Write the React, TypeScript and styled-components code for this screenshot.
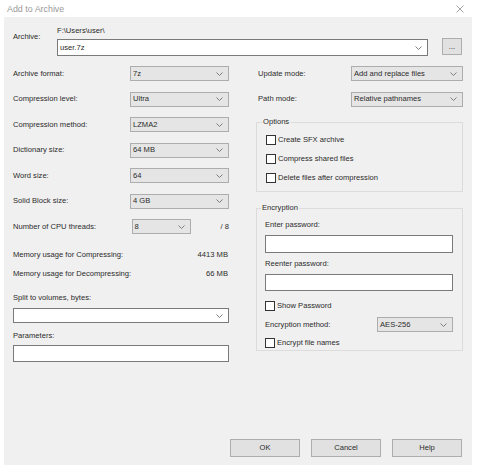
import styled, { createGlobalStyle } from 'styled-components';

const GlobalStyle = createGlobalStyle`
  html, body {
    margin: 0;
    padding: 0;
    background: #ffffff;
  }
  body {
    font-family: "Liberation Sans", Arial, sans-serif;
  }
  * {
    box-sizing: border-box;
  }
`;

const Window = styled.div`
  width: 479px;
  height: 465px;
  display: flex;
  flex-direction: column;
  background: #ffffff;
  overflow: hidden;
`;

const TitleBar = styled.div`
  flex: 0 0 17px;
  display: flex;
  align-items: center;
  justify-content: space-between;
  padding: 0 15px 0 7px;
  font-size: 8.9px;
  color: #9a9a9a;
`;

const Body = styled.div`
  flex: 1;
  margin: 0 7px 0 4px;
  padding: 9px 9px 8px;
  background: #f0f0f0;
  display: flex;
  flex-direction: column;
  font-size: 7.6px;
  line-height: 12px;
  color: #2b2b2b;
`;

const ArchiveRow = styled.div`
  display: flex;
  align-items: flex-start;
`;

const ArchiveLabel = styled.div`
  width: 44px;
  margin-top: 5px;
`;

const PathColumn = styled.div`
  width: 371px;
  display: flex;
  flex-direction: column;
`;

const PathText = styled.div`
  line-height: 10px;
  margin-bottom: 3px;
`;

const Combo = styled.div<{ $height?: number }>`
  height: ${(p) => p.$height || 17}px;
  background: #ffffff;
  border: 1px solid #7a7a7a;
  display: flex;
  align-items: center;
  justify-content: space-between;
  padding: 0 5px 0 2px;
`;

const Select = styled.div<{ $width: number }>`
  width: ${(p) => p.$width}px;
  height: 15px;
  flex: 0 0 auto;
  background: #e5e5e5;
  border: 1px solid #adadad;
  display: flex;
  align-items: center;
  justify-content: space-between;
  padding: 0 5px 0 2px;
`;

const Button = styled.div<{ $width?: number; $height?: number }>`
  width: ${(p) => p.$width || 70}px;
  height: ${(p) => p.$height || 18}px;
  background: #e1e1e1;
  border: 1px solid #adadad;
  display: flex;
  align-items: center;
  justify-content: center;
`;

const BrowseButton = styled(Button)`
  margin: 12px 0 0 14px;
`;

const MainGrid = styled.div`
  display: grid;
  grid-template-columns: 216px 207px;
  column-gap: 27px;
  margin-top: 10px;
`;

const Column = styled.div`
  display: flex;
  flex-direction: column;
`;

const FieldStack = styled.div`
  display: flex;
  flex-direction: column;
  gap: 10.5px;
`;

const FieldRow = styled.div<{ $indent?: number }>`
  height: 15px;
  display: flex;
  align-items: center;
  justify-content: space-between;
  padding-left: ${(p) => p.$indent || 0}px;
`;

const ThreadsGroup = styled.div`
  display: flex;
  align-items: center;
  gap: 30px;
`;

const InfoRow = styled.div<{ $top: number }>`
  display: flex;
  justify-content: space-between;
  padding-right: 1px;
  margin-top: ${(p) => p.$top}px;
`;

const Caption = styled.div<{ $top: number }>`
  margin-top: ${(p) => p.$top}px;
`;

const TextInput = styled.div<{ $top: number; $height: number }>`
  margin-top: ${(p) => p.$top}px;
  height: ${(p) => p.$height}px;
  background: #ffffff;
  border: 1px solid #7a7a7a;
`;

const SplitCombo = styled(Combo)`
  margin-top: 4px;
`;

const GroupBox = styled.fieldset<{ $top: number; $padding: string }>`
  margin: ${(p) => p.$top}px 0 0;
  padding: ${(p) => p.$padding};
  border: 1px solid #dcdcdc;
  min-width: 0;
  display: flex;
  flex-direction: column;
`;

const GroupTitle = styled.legend`
  margin-left: -4px;
  padding: 0 1px;
  line-height: 10px;
  font-size: 7.6px;
`;

const CheckRow = styled.label<{ $top?: number }>`
  display: flex;
  align-items: center;
  gap: 2px;
  height: 12px;
  margin-top: ${(p) => p.$top || 0}px;
`;

const CheckBox = styled.span`
  width: 10px;
  height: 10px;
  background: #ffffff;
  border: 1px solid #333333;
`;

const MethodRow = styled.div`
  height: 15px;
  margin-top: 5px;
  display: flex;
  align-items: center;
  justify-content: space-between;
`;

const ButtonBar = styled.div`
  margin-top: auto;
  margin-right: 1px;
  display: flex;
  justify-content: flex-end;
  gap: 11px;
`;

function Chevron() {
  return (
    <svg width="7" height="4" viewBox="0 0 7 4">
      <polyline points="0.5,0.5 3.5,3.5 6.5,0.5" fill="none" stroke="#707070" strokeWidth="0.9" />
    </svg>
  );
}

function CloseIcon() {
  return (
    <svg width="8" height="8" viewBox="0 0 8 8">
      <path d="M0.5 0.5 L7.5 7.5 M7.5 0.5 L0.5 7.5" stroke="#9a9a9a" strokeWidth="0.9" />
    </svg>
  );
}

const leftFields = [
  { label: 'Archive format:', value: '7z' },
  { label: 'Compression level:', value: 'Ultra' },
  { label: 'Compression method:', value: 'LZMA2' },
  { label: 'Dictionary size:', value: '64 MB' },
  { label: 'Word size:', value: '64' },
  { label: 'Solid Block size:', value: '4 GB' },
];

const options = ['Create SFX archive', 'Compress shared files', 'Delete files after compression'];

export default function App() {
  return (
    <>
      <GlobalStyle />
      <Window>
        <TitleBar>
          <span>Add to Archive</span>
          <CloseIcon />
        </TitleBar>
        <Body>
          <ArchiveRow>
            <ArchiveLabel>Archive:</ArchiveLabel>
            <PathColumn>
              <PathText>F:\Users\user\</PathText>
              <Combo>
                <span>user.7z</span>
                <Chevron />
              </Combo>
            </PathColumn>
            <BrowseButton $width={20} $height={17}>...</BrowseButton>
          </ArchiveRow>

          <MainGrid>
            <Column>
              <FieldStack>
                {leftFields.map((f) => (
                  <FieldRow key={f.label}>
                    <span>{f.label}</span>
                    <Select $width={99}>
                      <span>{f.value}</span>
                      <Chevron />
                    </Select>
                  </FieldRow>
                ))}
                <FieldRow>
                  <span>Number of CPU threads:</span>
                  <ThreadsGroup>
                    <Select $width={59}>
                      <span>8</span>
                      <Chevron />
                    </Select>
                    <span>/ 8</span>
                  </ThreadsGroup>
                </FieldRow>
              </FieldStack>
              <InfoRow $top={15}>
                <span>Memory usage for Compressing:</span>
                <span>4413 MB</span>
              </InfoRow>
              <InfoRow $top={7}>
                <span>Memory usage for Decompressing:</span>
                <span>66 MB</span>
              </InfoRow>
              <Caption $top={12}>Split to volumes, bytes:</Caption>
              <SplitCombo $height={15}>
                <span />
                <Chevron />
              </SplitCombo>
              <Caption $top={7}>Parameters:</Caption>
              <TextInput $top={3} $height={17} />
            </Column>

            <Column>
              <FieldStack>
                <FieldRow $indent={2}>
                  <span>Update mode:</span>
                  <Select $width={112}>
                    <span>Add and replace files</span>
                    <Chevron />
                  </Select>
                </FieldRow>
                <FieldRow $indent={2}>
                  <span>Path mode:</span>
                  <Select $width={112}>
                    <span>Relative pathnames</span>
                    <Chevron />
                  </Select>
                </FieldRow>
              </FieldStack>

              <GroupBox $top={10.5} $padding="7px 9px 7px 9px">
                <GroupTitle>Options</GroupTitle>
                {options.map((o, i) => (
                  <CheckRow key={o} $top={i === 0 ? 0 : 7}>
                    <CheckBox />
                    <span>{o}</span>
                  </CheckRow>
                ))}
              </GroupBox>

              <GroupBox $top={11} $padding="6px 9px 1px 8px">
                <GroupTitle>Encryption</GroupTitle>
                <div>Enter password:</div>
                <TextInput $top={4} $height={18} />
                <Caption $top={5}>Reenter password:</Caption>
                <TextInput $top={4} $height={17} />
                <CheckRow $top={9}>
                  <CheckBox />
                  <span>Show Password</span>
                </CheckRow>
                <MethodRow>
                  <span>Encryption method:</span>
                  <Select $width={76}>
                    <span>AES-256</span>
                    <Chevron />
                  </Select>
                </MethodRow>
                <CheckRow $top={5}>
                  <CheckBox />
                  <span>Encrypt file names</span>
                </CheckRow>
              </GroupBox>
            </Column>
          </MainGrid>

          <ButtonBar>
            <Button>OK</Button>
            <Button>Cancel</Button>
            <Button>Help</Button>
          </ButtonBar>
        </Body>
      </Window>
    </>
  );
}
